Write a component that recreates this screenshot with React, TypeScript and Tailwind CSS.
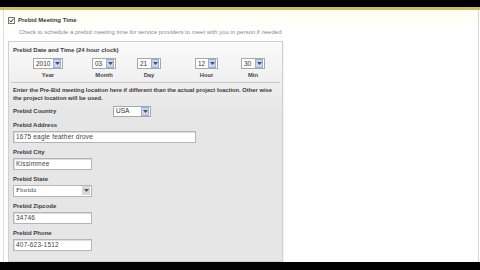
import React from "react";

const font = { fontFamily: '"Liberation Sans", Arial, sans-serif' };

function Arrow() {
  return (
    <span className="flex h-[9px] w-[8px] items-center justify-center border border-[#9fb0d0] bg-[#c9d6ee]">
      <svg width="5" height="3" viewBox="0 0 5 3">
        <path d="M0 0 L5 0 L2.5 3 Z" fill="#3a4f7a" />
      </svg>
    </span>
  );
}

function DatePart({ value, label, w, ml }: { value: string; label: string; w: string; ml: string }) {
  return (
    <div className={join("flex flex-col items-center", ml)}>
      <div className={join("flex h-[11px] items-center justify-between border border-[#a8a8a8] bg-white pl-[2px] pr-[1px]", w)}>
        <span className="text-[6.5px] text-[#333]">{value}</span>
        <Arrow />
      </div>
      <span className="mt-[2px] text-[5.8px] font-bold text-[#444]">{label}</span>
    </div>
  );
}

function join(a: string, b: string) {
  return a + " " + b;
}

function Label({ children }: { children: React.ReactNode }) {
  return <div className="text-[6px] font-bold leading-none text-[#3a3a3a]">{children}</div>;
}

function TextBox({ value, w }: { value: string; w: string }) {
  return (
    <div className={join("flex h-[12px] items-center border border-[#b5b5b5] bg-white px-[2px] shadow-[inset_1px_1px_0_#ddd]", w)}>
      <span className="text-[6.5px] tracking-[0.2px] text-[#444]">{value}</span>
    </div>
  );
}

export default function App() {
  return (
    <div className="flex h-[270px] w-[480px] flex-col overflow-hidden bg-white" style={font}>
      <div className="h-[7px] bg-black" />
      <div className="h-[3px] bg-[#cdbd6c]" />
      <div className="flex flex-1 flex-col bg-gradient-to-b from-[#fffdf0] to-white to-[20px]">
        <div className="flex flex-1">
          <div className="ml-[3px] w-px bg-[#dcdcdc]" />
          <div className="flex flex-1 flex-col">
            <div className="flex items-center gap-[3px] pl-[4px] pt-[6px]">
              <span className="flex h-[7px] w-[7px] items-center justify-center border border-[#777] bg-white">
                <svg width="5" height="5" viewBox="0 0 5 5">
                  <path d="M0.5 2.5 L2 4 L4.6 0.6" stroke="#333" strokeWidth="1" fill="none" />
                </svg>
              </span>
              <span className="text-[6px] font-bold text-[#3a3a3a]">Prebid Meeting Time</span>
            </div>
            <div className="pl-[15px] pt-[3px] text-[6px] text-[#8a8a8a]">
              Check to schedule a prebid meeting time for service providers to meet with you in person if needed
            </div>
            <div className="ml-[4px] mt-[4px] flex w-[275px] flex-1 flex-col border border-[#cfcfcf] bg-[linear-gradient(to_bottom,#fbfbfb_0px,#e6e6e6_70px)] shadow-[1px_0_0_#f4f4f4]">
              <div className="px-[4px] pt-[4px]">
                <div className="text-[6px] font-bold text-[#3a3a3a]">Prebid Date and Time (24 hour clock)</div>
                <div className="flex pt-[3px]">
                  <DatePart value="2010" label="Year" w="w-[30px]" ml="ml-[20px]" />
                  <DatePart value="03" label="Month" w="w-[24px]" ml="ml-[29px]" />
                  <DatePart value="21" label="Day" w="w-[24px]" ml="ml-[21px]" />
                  <DatePart value="12" label="Hour" w="w-[23px]" ml="ml-[34px]" />
                  <DatePart value="30" label="Min" w="w-[24px]" ml="ml-[23px]" />
                </div>
              </div>
              <div className="mx-[2px] mt-[2px] h-px bg-[#c8c8c8]" />
              <div className="px-[4px] pt-[3px]">
                <div className="text-[5.8px] font-bold leading-[8px] text-[#3a3a3a]">
                  Enter the Pre-Bid meeting location here if different than the actual project loaction. Other wise the project location will be used.
                </div>
                <div className="mt-[4px] flex items-center">
                  <div className="w-[100px]">
                    <Label>Prebid Country</Label>
                  </div>
                  <div className="flex h-[11px] w-[38px] items-center justify-between border border-[#a8a8a8] bg-white pl-[2px] pr-[1px]">
                    <span className="text-[6.5px] text-[#333]">USA</span>
                    <Arrow />
                  </div>
                </div>
                <div className="mt-[5px] flex flex-col gap-[3px]">
                  <Label>Prebid Address</Label>
                  <TextBox value="1675 eagle feather drove" w="w-[183px]" />
                </div>
                <div className="mt-[6px] flex flex-col gap-[3px]">
                  <Label>Prebid City</Label>
                  <TextBox value="Kissimmee" w="w-[79px]" />
                </div>
                <div className="mt-[6px] flex flex-col gap-[3px]">
                  <Label>Prebid State</Label>
                  <div className="flex h-[12px] w-[79px] items-center justify-between border border-[#b5b5b5] bg-white pl-[2px] pr-[1px]">
                    <span className="text-[7px] text-[#444]" style={{ fontFamily: '"Liberation Serif", serif' }}>Florida</span>
                    <span className="flex h-[9px] w-[8px] items-center justify-center bg-[#d8d8d8]">
                      <svg width="5" height="3" viewBox="0 0 5 3">
                        <path d="M0 0 L5 0 L2.5 3 Z" fill="#555" />
                      </svg>
                    </span>
                  </div>
                </div>
                <div className="mt-[6px] flex flex-col gap-[3px]">
                  <Label>Prebid Zipcode</Label>
                  <TextBox value="34746" w="w-[79px]" />
                </div>
                <div className="mt-[6px] flex flex-col gap-[3px]">
                  <Label>Prebid Phone</Label>
                  <TextBox value="407-623-1512" w="w-[79px]" />
                </div>
              </div>
            </div>
          </div>
          <div className="mr-[1px] w-px bg-[#d6d6d6]" />
        </div>
      </div>
      <div className="h-[8px] bg-black" />
    </div>
  );
}
